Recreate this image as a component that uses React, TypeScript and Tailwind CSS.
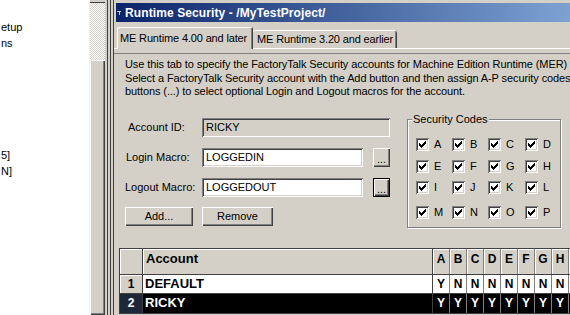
import React from "react";

const raised = "shadow-[inset_1px_1px_0_#fff,inset_-1px_-1px_0_#404040,inset_-2px_-2px_0_#808080]";
const sunken =
  "shadow-[inset_1px_1px_0_#808080,inset_-1px_-1px_0_#fff,inset_2px_2px_0_#404040,inset_-2px_-2px_0_#d4d0c8]";

const treeRows = ["etup", "ns", "", "", "", "", "", "", "5]", "N]"];

const codeRows = [
  { mt: "mt-[18px]", keys: ["A", "B", "C", "D"] },
  { mt: "mt-[9px]", keys: ["E", "F", "G", "H"] },
  { mt: "mt-[8px]", keys: ["I", "J", "K", "L"] },
  { mt: "mt-[12px]", keys: ["M", "N", "O", "P"] },
];

const gridCols = ["A", "B", "C", "D", "E", "F", "G", "H", ""];
const accounts = [
  { n: "1", name: "DEFAULT", codes: ["Y", "N", "N", "N", "N", "N", "N", "N", ""], selected: false },
  { n: "2", name: "RICKY", codes: ["Y", "Y", "Y", "Y", "Y", "Y", "Y", "Y", ""], selected: true },
];

function CheckBox() {
  return (
    <span className={`flex h-[13px] w-[13px] shrink-0 items-center justify-center bg-white ${sunken}`}>
      <svg width="7" height="7" viewBox="0 0 7 7">
        <path
          d="M0 2h1v3H0zM1 3h1v3H1zM2 4h1v3H2zM3 3h1v3H3zM4 2h1v3H4zM5 1h1v3H5zM6 0h1v3H6z"
          fill="#000"
        />
      </svg>
    </span>
  );
}

function Field({ label, value, width, disabled, labelPad }: { label: string; value: string; width: string; disabled?: boolean; labelPad: string }) {
  return (
    <div className="flex h-[19px] items-center">
      <span className={`w-[77px] shrink-0 ${labelPad}`}>{label}</span>
      <div className={`flex h-[19px] items-center pl-[4px] ${width} ${disabled ? "bg-[#d4d0c8]" : "bg-white"} ${sunken}`}>
        {value}
      </div>
    </div>
  );
}

export default function App() {
  return (
    <div className="flex h-[315px] w-[570px] overflow-hidden bg-[#d4d0c8] font-['Liberation_Sans',Arial,sans-serif] text-[11px] text-black">
      {/* tree pane */}
      <div className="w-[89px] shrink-0 bg-white pt-[19px]">
        {treeRows.map((t, i) => (
          <div key={i} className="h-[16px] whitespace-nowrap pl-px leading-[16px]">
            {t}
          </div>
        ))}
      </div>

      {/* vertical scrollbar */}
      <div className="flex w-[16px] shrink-0 flex-col border-l border-[#f0f0f0]">
        <div className="h-[3px] border-b border-[#404040] bg-[#d4d0c8]" />
        <div className="h-[57px] bg-[image:repeating-conic-gradient(#d4d0c8_0_25%,#ffffff_0_50%)] bg-size-[2px_2px]" />
        <div className={`flex-1 bg-[#d4d0c8] ${raised}`} />
      </div>

      {/* splitter */}
      <div className="flex w-[9px] shrink-0">
        <div className="w-[2px]" />
        <div className="w-px bg-[#404040]" />
        <div className="w-[2px]" />
        <div className="w-px bg-[#404040]" />
        <div className="w-[2px]" />
        <div className="w-px bg-[#404040]" />
      </div>

      {/* window */}
      <div className="flex min-w-0 flex-1 flex-col pt-[3px]">
        <div className="ml-[2px] flex h-[19px] items-center bg-[linear-gradient(to_right,#0a246a,#7da2d2)] text-white">
          <svg width="6" height="6" viewBox="0 0 6 6" className="ml-px mr-[2px]">
            <path d="M0 1h4v1H3v3H2V2H0z" fill="#c8c8c8" />
          </svg>
          <span className="whitespace-nowrap text-[12px] font-bold tracking-[0.1px]">Runtime Security - /MyTestProject/</span>
        </div>

        {/* tabs */}
        <div className="flex h-[26px] items-end pl-[3px] tracking-[-0.15px]">
          <div className="relative z-10 -mb-px flex h-[22px] items-center rounded-t-[2px] bg-[#d4d0c8] pr-[6px] pl-[3px] shadow-[inset_1px_1px_0_#fff,inset_-1px_0_0_#404040,inset_-2px_0_0_#808080] whitespace-nowrap">
            ME Runtime 4.00 and later
          </div>
          <div className="flex h-[18px] items-center rounded-t-[2px] bg-[#d4d0c8] pr-[4px] pl-[4px] shadow-[inset_0_1px_0_#fff,inset_-1px_0_0_#404040,inset_-2px_0_0_#808080] whitespace-nowrap">
            ME Runtime 3.20 and earlier
          </div>
        </div>

        {/* page */}
        <div className="flex flex-1 flex-col border-t border-white pt-[4px]">
          <div className="flex flex-1 flex-col border-t border-[#808080] pl-[5px] pt-[4px]">
            <div className="pl-[6px]">
              <div className="whitespace-nowrap leading-[13.5px] tracking-[-0.1px]">
                <div>Use this tab to specify the FactoryTalk Security accounts for Machine Edition Runtime (MER) version 4.00 and later.</div>
                <div>Select a FactoryTalk Security account with the Add button and then assign A-P security codes to it. Use the browse</div>
                <div>buttons (...) to select optional Login and Logout macros for the account.</div>
              </div>

              <div className="mt-[19px] flex items-start">
                <div className="flex w-[265px] shrink-0 flex-col">
                  <Field label="Account ID:" value="RICKY" width="w-[188px]" disabled labelPad="pl-[3px]" />
                  <div className="mt-[11px] flex items-center">
                    <Field label="Login Macro:" value="LOGGEDIN" width="w-[161px]" labelPad="pl-px" />
                    <div className={`ml-[10px] flex h-[19px] w-[17px] items-end justify-center pb-[2px] leading-none ${raised}`}>...</div>
                  </div>
                  <div className="mt-[11px] flex items-center">
                    <Field label="Logout Macro:" value="LOGGEDOUT" width="w-[161px]" labelPad="" />
                    <div className="ml-[10px] flex h-[19px] w-[17px] items-end justify-center pb-[2px] leading-none shadow-[inset_0_0_0_1px_#000,inset_2px_2px_0_#fff,inset_-2px_-2px_0_#404040,inset_-3px_-3px_0_#808080]">...</div>
                  </div>
                  <div className="mt-[10px] flex">
                    <div className={`flex h-[19px] w-[68px] items-center justify-center ${raised}`}>Add...</div>
                    <div className={`ml-[9px] flex h-[19px] w-[71px] items-center justify-center ${raised}`}>Remove</div>
                  </div>
                </div>

                <div className="relative ml-[17px] mt-px h-[109px] w-[154px] shrink-0 border border-[#808080] shadow-[inset_1px_1px_0_#fff,1px_1px_0_#fff]">
                  <span className="absolute -top-[7px] left-[4px] bg-[#d4d0c8] px-px leading-[13px]">Security Codes</span>
                  {codeRows.map((row) => (
                    <div key={row.keys[0]} className={`${row.mt} grid grid-cols-[36px_36px_37px_36px] pl-[8px]`}>
                      {row.keys.map((k) => (
                        <div key={k} className="flex h-[13px] items-center">
                          <CheckBox />
                          <span className="ml-[5px] leading-[13px]">{k}</span>
                        </div>
                      ))}
                    </div>
                  ))}
                </div>
              </div>
            </div>

            {/* accounts grid */}
            <div className="mt-[20px] flex flex-col border-t border-l border-[#404040] font-bold">
              <div className="flex h-[26px] border-b border-[#404040]">
                <div className="w-[23px] shrink-0 border-r border-[#404040] shadow-[inset_1px_1px_0_#fff]" />
                <div className="flex w-[290px] shrink-0 items-center border-r border-[#404040] pl-[3px] pb-[4px] text-[13px] shadow-[inset_1px_1px_0_#fff]">
                  Account
                </div>
                {gridCols.map((c, i) => (
                  <div
                    key={i}
                    className="flex w-[17px] shrink-0 items-center justify-center border-r border-[#808080] pb-[4px] text-[12px] shadow-[inset_1px_1px_0_#fff]"
                  >
                    {c}
                  </div>
                ))}
              </div>
              {accounts.map((a) => (
                <div
                  key={a.n}
                  className={`flex ${a.selected ? "h-[20px] bg-black text-white" : "h-[19px] bg-white"} border-b border-[#404040]`}
                >
                  <div
                    className={`flex w-[23px] shrink-0 items-center justify-center border-r border-[#404040] text-[12px] ${
                      a.selected ? "bg-[#1c2838] text-white" : "bg-[#d4d0c8] shadow-[inset_1px_1px_0_#fff]"
                    }`}
                  >
                    {a.n}
                  </div>
                  <div className="flex w-[290px] shrink-0 items-center border-r border-[#404040] pl-[2px] text-[13px]">{a.name}</div>
                  {a.codes.map((c, i) => (
                    <div key={i} className="flex w-[17px] shrink-0 items-center justify-center border-r border-[#808080] text-[12px]">
                      {c}
                    </div>
                  ))}
                </div>
              ))}
            </div>
          </div>
        </div>
      </div>
    </div>
  );
}
